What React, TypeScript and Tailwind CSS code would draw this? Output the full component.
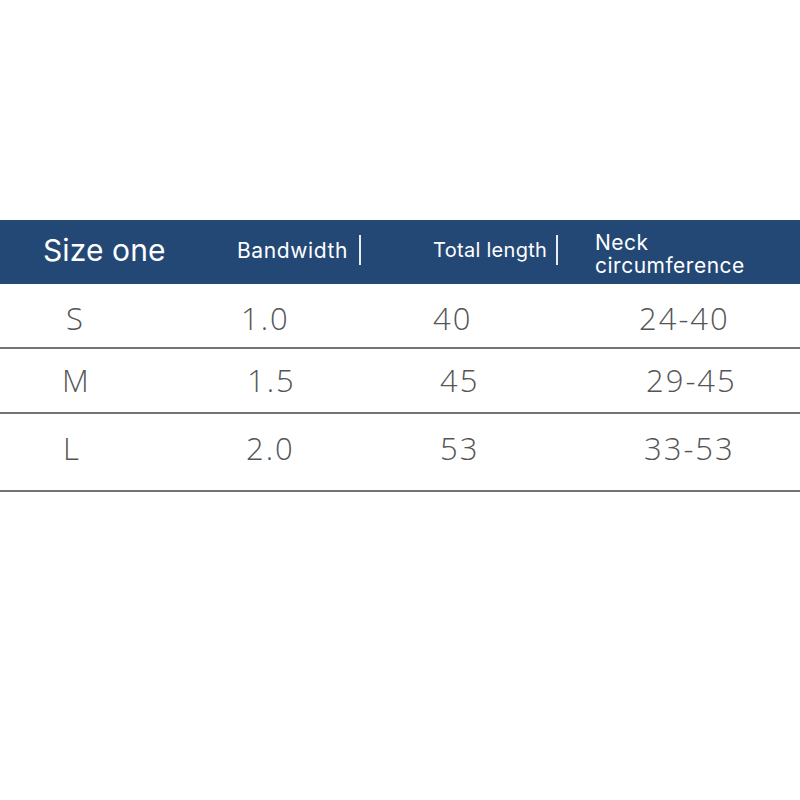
import React from 'react'

const rows = [
  {
    h: 'h-[65px] pt-[5px]',
    cells: [
      { text: 'S', cls: 'w-[230px] pl-[66px]' },
      { text: '1.0', cls: 'w-[195px] pl-[11px]' },
      { text: '40', cls: 'w-[160px] pl-[8px]' },
      { text: '24-40', cls: 'pl-[54px]' },
    ],
  },
  {
    h: 'h-[65px]',
    cells: [
      { text: 'M', cls: 'w-[230px] pl-[62px]' },
      { text: '1.5', cls: 'w-[195px] pl-[17px]' },
      { text: '45', cls: 'w-[160px] pl-[15px]' },
      { text: '29-45', cls: 'pl-[61px]' },
    ],
  },
  {
    h: 'h-[78px] pb-[7px]',
    cells: [
      { text: 'L', cls: 'w-[230px] pl-[63px]' },
      { text: '2.0', cls: 'w-[195px] pl-[16px]' },
      { text: '53', cls: 'w-[160px] pl-[15px]' },
      { text: '33-53', cls: 'pl-[59px]' },
    ],
  },
]

export default function App() {
  return (
    <div className="w-[800px] h-[800px] bg-white overflow-hidden font-['Inter',sans-serif]">
      <div className="h-[220px]" />

      {/* Header band */}
      <div className="h-[64px] pb-[4px] bg-[#234876] flex items-center text-white">
        <div className="w-[230px] pl-[43px] text-[30px] leading-none tracking-[0.1px]">Size one</div>
        <div className="w-[195px] pl-[7px] flex items-center">
          <span className="text-[21px] leading-none tracking-[0.6px]">Bandwidth</span>
          <span className="ml-[11px] w-[2px] h-[30px] bg-white/90" />
        </div>
        <div className="w-[160px] pl-[8px] flex items-center">
          <span className="text-[20px] leading-none tracking-[0.3px]">Total length</span>
          <span className="ml-[9px] w-[2px] h-[30px] bg-white/90" />
        </div>
        <div className="self-start pt-[11px] pl-[10px] text-[21px] leading-[23px] tracking-[0.5px] flex flex-col">
          <span>Neck</span>
          <span>circumference</span>
        </div>
      </div>

      {/* Body rows */}
      {rows.map((row, i) => (
        <div key={i} className={`${row.h} flex items-center border-b-2 border-[#747474] text-[#555] font-['Open_Sans',sans-serif] font-light text-[31px] tracking-[2px]`}>
          {row.cells.map((c, j) => (
            <div key={j} className={c.cls}>
              {c.text}
            </div>
          ))}
        </div>
      ))}
    </div>
  )
}
